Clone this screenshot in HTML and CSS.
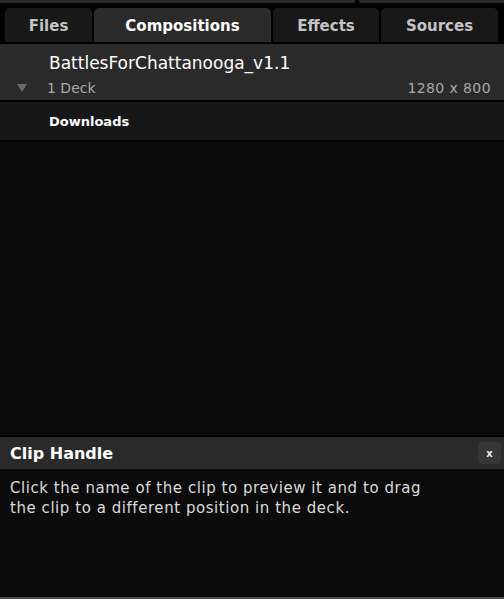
FILE: index.html
```html
<!DOCTYPE html>
<html>
<head>
<meta charset="utf-8">
<link rel="stylesheet" href="styles.css">
</head>
<body>
<div class="app">
  <div class="topstrip"><div class="seg seg-a"></div><div class="seg seg-b"></div></div>
  <div class="tabs">
    <div class="tab tab-files">Files</div>
    <div class="tab tab-comp active">Compositions</div>
    <div class="tab tab-effects">Effects</div>
    <div class="tab tab-sources">Sources</div>
  </div>
  <div class="comp">
    <div class="comp-title">BattlesForChattanooga_v1.1</div>
    <div class="comp-meta">
      <span class="tri"></span>
      <span class="deck">1 Deck</span>
      <span class="res">1280 x 800</span>
    </div>
  </div>
  <div class="downloads">Downloads</div>
  <div class="empty"></div>
  <div class="help">
    <div class="help-head">
      <span class="help-title">Clip Handle</span>
      <span class="close">x</span>
    </div>
    <div class="help-body">Click the name of the clip to preview it and to drag the clip to a different position in the deck.</div>
  </div>
  <div class="bottomline"></div>
</div>
</body>
</html>
```

FILE: styles.css
```css
html, body {
  margin: 0;
  padding: 0;
  background: #000;
}
.app {
  width: 504px;
  height: 599px;
  display: flex;
  flex-direction: column;
  background: #000;
  font-family: "DejaVu Sans", "Liberation Sans", sans-serif;
  overflow: hidden;
}
.topstrip {
  height: 3px;
  display: flex;
  gap: 4px;
  flex: none;
}
.seg { background: #2b2b2b; height: 3px; }
.seg-a { width: 355px; }
.seg-b { flex: 1; }
.tabs {
  display: flex;
  margin-top: 5px;
  padding-left: 5px;
  gap: 2px;
  height: 34px;
  flex: none;
}
.tab {
  background: #181818;
  color: #c4c4c4;
  font-weight: bold;
  font-size: 15px;
  display: flex;
  align-items: center;
  justify-content: center;
  border-radius: 5px 5px 0 0;
  padding-top: 1px;
  box-sizing: border-box;
}
.tab-files { width: 87px; }
.tab-comp { width: 177px; }
.tab-effects { width: 106px; }
.tab-sources { width: 117px; }
.tab.active {
  background: #2a2a2a;
  color: #fff;
}
.comp {
  margin-top: 2px;
  background: #2a2a2a;
  height: 56px;
  flex: none;
  box-sizing: border-box;
  padding-top: 9px;
}
.comp-title {
  color: #fff;
  font-size: 17px;
  padding-left: 49px;
  line-height: 20px;
}
.comp-meta {
  display: flex;
  align-items: center;
  margin-top: 6px;
  height: 18px;
  color: #a8a8a8;
  font-size: 14px;
}
.tri {
  width: 0;
  height: 0;
  border-left: 5px solid transparent;
  border-right: 5px solid transparent;
  border-top: 8px solid #6a6a6a;
  margin-left: 17px;
  margin-right: 20px;
}
.deck { flex: 1; }
.res { padding-right: 13px; letter-spacing: 0.4px; }
.downloads {
  margin-top: 2px;
  background: #171717;
  height: 38px;
  flex: none;
  color: #fff;
  font-weight: bold;
  font-size: 13px;
  display: flex;
  align-items: center;
  padding-left: 49px;
  border-bottom: 2px solid #050505;
}
.empty {
  flex: 1;
  background: #0b0b0b;
}
.help {
  flex: none;
  background: #0b0b0b;
  height: 160px;
  border-top: 2px solid #000;
}
.help-head {
  background: #2a2a2a;
  height: 32px;
  display: flex;
  align-items: center;
  justify-content: space-between;
  padding: 0 3px 0 10px;
}
.help-title {
  color: #fff;
  font-weight: bold;
  font-size: 16px;
}
.close {
  width: 23px;
  height: 22px;
  border-radius: 4px;
  background: #363636;
  color: #e8e8e8;
  font-size: 10px;
  font-weight: bold;
  display: flex;
  align-items: center;
  justify-content: center;
}
.help-body {
  color: #dadada;
  font-size: 15px;
  letter-spacing: 0.55px;
  line-height: 20px;
  padding: 9px 10px 0 10px;
  max-width: 432px;
}
.bottomline {
  height: 2px;
  flex: none;
  background: #4a4a4a;
}
```
